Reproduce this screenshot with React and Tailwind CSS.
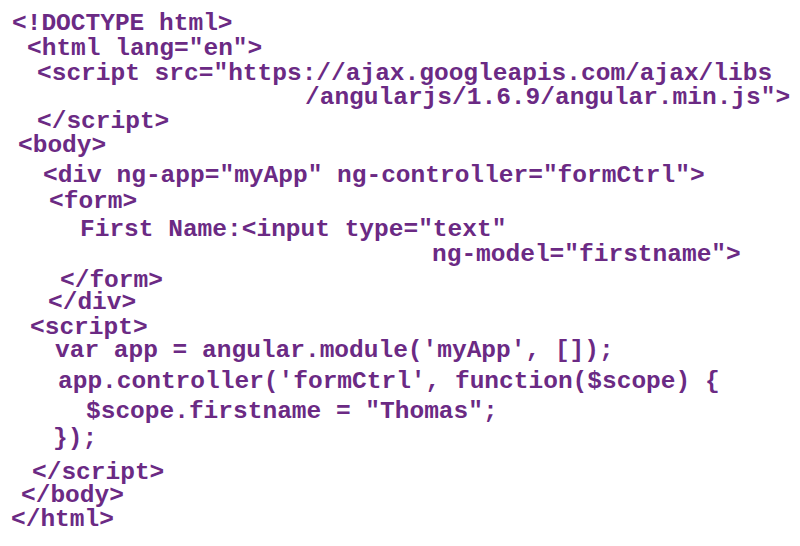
import React from 'react';

// each line: left offset, gap above, text
const lines = [
  { left: 12, gap: 13, text: '<!DOCTYPE html>' },
  { left: 27, gap: 4, text: '<html lang="en">' },
  { left: 37, gap: 4, text: '<script src="https://ajax.googleapis.com/ajax/libs' },
  { left: 305, gap: 3, text: '/angularjs/1.6.9/angular.min.js">' },
  { left: 37, gap: 3, text: '</script>' },
  { left: 18, gap: 3, text: '<body>' },
  { left: 43, gap: 9, text: '<div ng-app="myApp" ng-controller="formCtrl">' },
  { left: 49, gap: 5, text: '<form>' },
  { left: 80, gap: 7, text: 'First Name:<input type="text"' },
  { left: 432, gap: 4, text: 'ng-model="firstname">' },
  { left: 60, gap: 5, text: '</form>' },
  { left: 48, gap: 1, text: '</div>' },
  { left: 30, gap: 4, text: '<script>' },
  { left: 55, gap: 2, text: "var app = angular.module('myApp', []);" },
  { left: 58, gap: 10, text: "app.controller('formCtrl', function($scope) {" },
  { left: 86, gap: 9, text: '$scope.firstname = "Thomas";' },
  { left: 53, gap: 6, text: '});' },
  { left: 32, gap: 13, text: '</script>' },
  { left: 21, gap: 2, text: '</body>' },
  { left: 11, gap: 3, text: '</html>' },
];

export default function App() {
  return (
    <div className="w-[800px] h-[546px] bg-white overflow-hidden">
      <div className="flex flex-col font-['Liberation_Mono',monospace] font-bold text-[24.5px] leading-[21px] text-[#6b2a84]">
        {lines.map((l, i) => (
          <div
            key={i}
            className="whitespace-pre"
            style={{ paddingLeft: l.left, marginTop: l.gap }}
          >
            {l.text}
          </div>
        ))}
      </div>
    </div>
  );
}
